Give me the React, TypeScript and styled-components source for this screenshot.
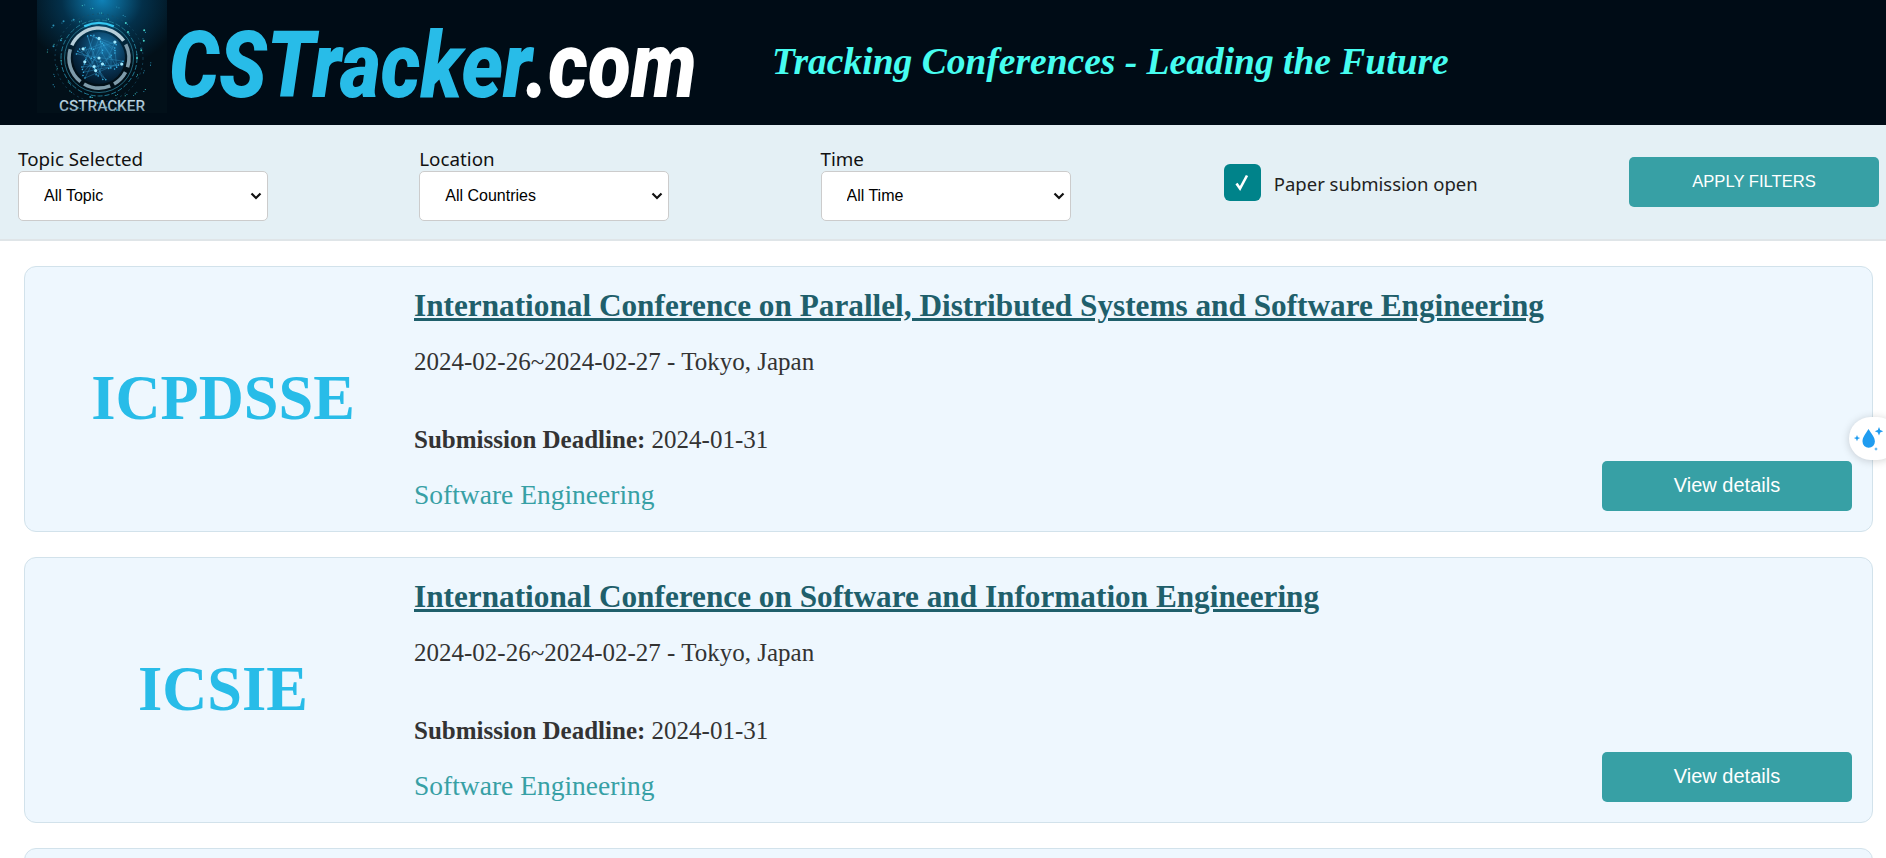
import React from "react";
import styled, { createGlobalStyle } from "styled-components";

const Global = createGlobalStyle`
  html, body { margin: 0; padding: 0; height: 858px; overflow: hidden; background: #fff; }
  * { box-sizing: border-box; }
`;

const Page = styled.div`
  width: 1886px;
  height: 858px;
  overflow: hidden;
  position: relative;
  font-family: "Liberation Serif", serif;
`;

const Header = styled.header`
  height: 125px;
  background: #000c16;
  display: flex;
  align-items: flex-start;
  padding-left: 37px;
`;

const LogoImage = styled.svg`
  width: 130px;
  height: 125px;
  flex: none;
  display: block;
`;

const Wordmark = styled.div`
  width: 536px;
  margin-left: 2px;
  margin-top: 16px;
  flex: none;
  font-family: Roboto, sans-serif;
  font-weight: 900;
  font-style: italic;
  font-size: 92px;
  line-height: 100px;
  white-space: nowrap;
  color: #28bce8;
  transform: scaleX(0.855);
  transform-origin: left center;
`;

const WordmarkTail = styled.span`
  color: #fff;
`;

const Tagline = styled.h1`
  margin: 40px 0 0 67px;
  font-family: "Liberation Serif", serif;
  font-weight: 700;
  font-style: italic;
  font-size: 37.5px;
  line-height: 44px;
  color: #46fdf0;
  white-space: nowrap;
`;

const FilterBar = styled.section`
  height: 116px;
  background: #e4f0f5;
  border-bottom: 2px solid #dfe5e8;
  display: flex;
  justify-content: space-between;
  padding: 0 7px 0 18px;
  font-family: "Noto Sans", sans-serif;
`;

const FilterGroup = styled.label`
  width: 250px;
  display: flex;
  flex-direction: column;
  padding-top: 22px;
`;

const FilterLabel = styled.span`
  font-size: 18.8px;
  line-height: 24px;
  color: #111;
  white-space: nowrap;
`;

const SelectWrap = styled.span`
  position: relative;
  display: block;
  width: 250px;
  height: 50px;
`;

const SelectBox = styled.select`
  appearance: none;
  -webkit-appearance: none;
  display: block;
  width: 250px;
  height: 50px;
  border: 1px solid #cccccc;
  border-radius: 5px;
  background: #fff;
  padding: 0 0 2px 25px;
  font-family: "Liberation Sans", sans-serif;
  font-size: 16px;
  color: #000;
`;

const Chevron = styled.svg`
  position: absolute;
  right: 6px;
  top: 21px;
  width: 12px;
  height: 8px;
  pointer-events: none;
`;

const CheckGroup = styled.div`
  width: 256px;
  padding-left: 2px;
  display: flex;
  align-items: center;
  gap: 13px;
  height: 114px;
`;

const CheckBox = styled.span`
  width: 37px;
  height: 37px;
  flex: none;
  border-radius: 6px;
  background: #00838a;
  color: #fff;
  display: flex;
  align-items: center;
  justify-content: center;
`;

const CheckLabel = styled.span`
  font-size: 18.5px;
  line-height: 24px;
  padding-top: 3px;
  color: #222;
  white-space: nowrap;
`;

const ActionButton = styled.button`
  width: 250px;
  height: 50px;
  border: 0;
  border-radius: 5px;
  background: #37a0a5;
  color: #fff;
  font-family: "Liberation Sans", sans-serif;
  cursor: pointer;
`;

const ApplyButton = styled(ActionButton)`
  margin-top: 32px;
  font-size: 16.6px;
  padding-bottom: 1px;
`;

const CardList = styled.main`
  padding: 25px 13px 0 24px;
  display: flex;
  flex-direction: column;
  gap: 25px;
`;

const Card = styled.article`
  height: 266px;
  flex: none;
  background: #eef7fe;
  border: 1px solid #d2e2eb;
  border-radius: 12px;
  display: flex;
  position: relative;
`;

const Abbrev = styled.div`
  width: 380px;
  margin-left: 8px;
  flex: none;
  display: flex;
  align-items: center;
  justify-content: center;
  font-size: 62.4px;
  font-weight: 700;
  color: #28bce8;
  padding-bottom: 3px;
`;

const CardBody = styled.div`
  flex: 1;
  padding-left: 1px;
  display: flex;
  flex-direction: column;
  position: relative;
`;

const Title = styled.a`
  margin-top: 20px;
  font-size: 31.25px;
  line-height: 38px;
  font-weight: 700;
  color: #1f5f6b;
  text-decoration: underline;
  white-space: nowrap;
`;

const DateLine = styled.div`
  margin-top: 18px;
  font-size: 25px;
  line-height: 38px;
  color: #333;
`;

const Deadline = styled.div`
  margin-top: 40px;
  font-size: 25px;
  line-height: 38px;
  color: #333;
`;

const Topic = styled.div`
  margin-top: 16px;
  font-size: 27.5px;
  line-height: 40px;
  color: #37a0a5;
`;

const DetailsButton = styled(ActionButton)`
  position: absolute;
  right: 20px;
  bottom: 20px;
  font-size: 20px;
  padding-bottom: 2px;
`;

const FloatWidget = styled.div`
  position: absolute;
  left: 1849px;
  top: 417px;
  width: 50px;
  height: 43px;
  border-radius: 22px;
  background: #fff;
  box-shadow: 0 1px 8px rgba(0, 0, 0, 0.18);
  padding: 5px 0 0 4px;
`;

const CX = 62;
const CY = 58;

const polar = (r: number, deg: number) => {
  const a = (deg * Math.PI) / 180;
  return [CX + r * Math.cos(a), CY + r * Math.sin(a)];
};

const ringArc = (r: number, from: number, to: number) => {
  const [x1, y1] = polar(r, from);
  const [x2, y2] = polar(r, to);
  return `M${x1.toFixed(1)} ${y1.toFixed(1)}A${r} ${r} 0 ${to - from > 180 ? 1 : 0} 1 ${x2.toFixed(1)} ${y2.toFixed(1)}`;
};

const globeDots = Array.from({ length: 52 }, (_, i) => {
  const r = 25 * Math.sqrt(((i * 37) % 52) / 52);
  const [x, y] = polar(r, i * 137.5);
  return { x, y, s: i % 6 === 0 ? 1.6 : 0.75 };
});

const outerDots = Array.from({ length: 80 }, (_, i) => {
  const r = 38 + ((i * 13) % 19);
  const [x, y] = polar(r, i * 47.3);
  return { x, y, s: i % 5 === 0 ? 1 : 0.55 };
});

const LogoArt = () => (
  <LogoImage viewBox="0 0 130 125" role="img" aria-label="CSTracker logo">
    <defs>
      <radialGradient id="topGlow" cx="0.5" cy="0" r="0.62">
        <stop offset="0" stopColor="#0f82b8" />
        <stop offset="0.5" stopColor="#03304a" />
        <stop offset="1" stopColor="#021019" />
      </radialGradient>
      <radialGradient id="globe" cx="0.6" cy="0.3" r="0.7">
        <stop offset="0" stopColor="#1878ad" />
        <stop offset="0.65" stopColor="#083150" />
        <stop offset="1" stopColor="#03192b" />
      </radialGradient>
      <linearGradient id="brand" x1="0" y1="0" x2="0" y2="1">
        <stop offset="0" stopColor="#c9e2ee" />
        <stop offset="1" stopColor="#7596a8" />
      </linearGradient>
    </defs>
    <rect width="130" height="113" fill="url(#topGlow)" />
    <circle cx={CX} cy={CY} r="44" fill="none" stroke="#174f69" strokeWidth="0.7" strokeDasharray="2 3" />
    <circle cx={CX} cy={CY} r="38" fill="none" stroke="#1f7893" strokeWidth="1" strokeDasharray="5 2" />
    <circle cx={CX} cy={CY} r="26" fill="url(#globe)" />
    <g fill="none" stroke="#7f9baa" strokeWidth="3.6">
      <path d={ringArc(30, 205, 325)} stroke="#b6ced9" />
      <path d={ringArc(30, 333, 378)} />
      <path d={ringArc(30, 28, 60)} />
      <path d={ringArc(30, 68, 120)} />
      <path d={ringArc(30, 128, 197)} />
    </g>
    <circle cx={CX} cy={CY} r="34.5" fill="none" stroke="#2b7c96" strokeWidth="0.8" />
    <path d={ringArc(35, 245, 295)} fill="none" stroke="#35c8f2" strokeWidth="2.4" />
    <g stroke="#2f95c8" strokeWidth="0.4">
      {globeDots.slice(0, 34).map((d, i) => {
        const n = globeDots[(i * 5 + 3) % 52];
        return <line key={i} x1={d.x} y1={d.y} x2={n.x} y2={n.y} />;
      })}
    </g>
    {globeDots.map((d, i) => (
      <circle key={i} cx={d.x} cy={d.y} r={d.s} fill={d.s > 1 ? "#9fe9ff" : "#3ab8ea"} />
    ))}
    {outerDots.map((d, i) => (
      <circle key={i} cx={d.x} cy={d.y} r={d.s} fill={i % 3 ? "#2a93b8" : "#47d3c8"} />
    ))}
    <text x="65" y="111" textAnchor="middle" fontFamily="Roboto, sans-serif" fontWeight="500" fontSize="14.5" fill="url(#brand)" textLength="86" lengthAdjust="spacingAndGlyphs">
      CSTRACKER
    </text>
  </LogoImage>
);

const conferences = [
  { id: "ICPDSSE", title: "International Conference on Parallel, Distributed Systems and Software Engineering" },
  { id: "ICSIE", title: "International Conference on Software and Information Engineering" },
];

const filters = [
  { label: "Topic Selected", value: "All Topic" },
  { label: "Location", value: "All Countries" },
  { label: "Time", value: "All Time" },
];

export default function App() {
  return (
    <Page>
      <Global />
      <Header>
        <LogoArt />
        <Wordmark>
          CSTracker<WordmarkTail>.com</WordmarkTail>
        </Wordmark>
        <Tagline>Tracking Conferences - Leading the Future</Tagline>
      </Header>
      <FilterBar>
        {filters.map((f) => (
          <FilterGroup key={f.label}>
            <FilterLabel>{f.label}</FilterLabel>
            <SelectWrap>
              <SelectBox defaultValue={f.value}>
                <option>{f.value}</option>
              </SelectBox>
              <Chevron viewBox="0 0 12 8">
                <path d="M1.5 1.5 L6 6 L10.5 1.5" fill="none" stroke="#111" strokeWidth="2.2" />
              </Chevron>
            </SelectWrap>
          </FilterGroup>
        ))}
        <CheckGroup>
          <CheckBox>
            <svg width="18" height="20" viewBox="0 0 18 20">
              <path d="M3.5 11.5 L7 16.5 L14 3.5" fill="none" stroke="#fff" strokeWidth="2.6" />
            </svg>
          </CheckBox>
          <CheckLabel>Paper submission open</CheckLabel>
        </CheckGroup>
        <ApplyButton>APPLY FILTERS</ApplyButton>
      </FilterBar>
      <CardList>
        {conferences.map((c) => (
          <Card key={c.id}>
            <Abbrev>{c.id}</Abbrev>
            <CardBody>
              <Title>{c.title}</Title>
              <DateLine>2024-02-26~2024-02-27 - Tokyo, Japan</DateLine>
              <Deadline>
                <b>Submission Deadline:</b> 2024-01-31
              </Deadline>
              <Topic>Software Engineering</Topic>
              <DetailsButton>View details</DetailsButton>
            </CardBody>
          </Card>
        ))}
        <Card />
      </CardList>
      <FloatWidget>
        <svg width="32" height="32" viewBox="0 0 32 32" fill="#1f9cf0">
          <path d="M15.5 7 C12.5 12 9.5 15 9.5 19.5 a6.2 6.2 0 0 0 12.4 0 C21.9 15 18.5 12 15.5 7z" />
          <path d="M26 5 l1.2 3 3 1.2 -3 1.2 -1.2 3 -1.2 -3 -3 -1.2 3 -1.2z" />
          <path d="M4 13 l.9 2.2 2.2.9 -2.2.9 -.9 2.2 -.9 -2.2 -2.2 -.9 2.2 -.9z" />
          <path d="M23 25 l.5 1.5 1.5.5 -1.5.5 -.5 1.5 -.5 -1.5 -1.5 -.5 1.5 -.5z" />
        </svg>
      </FloatWidget>
    </Page>
  );
}
